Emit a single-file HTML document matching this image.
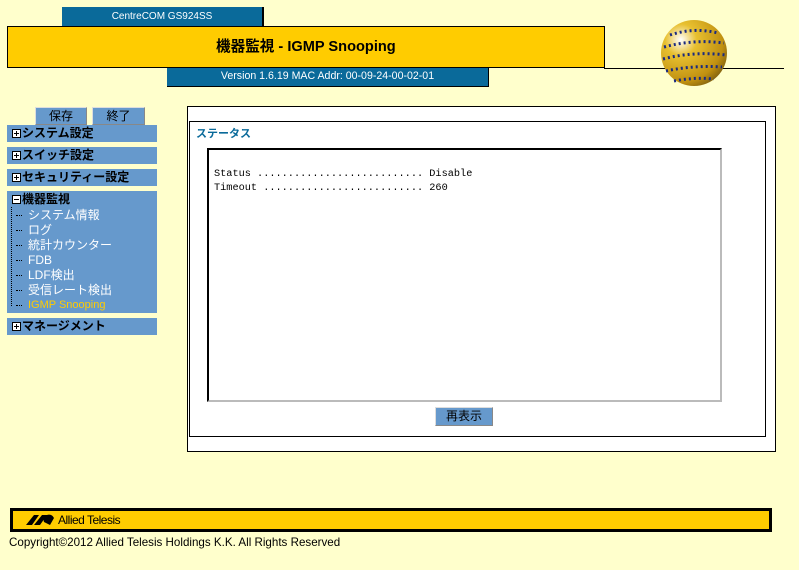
<!DOCTYPE html>
<html><head><meta charset="utf-8"><style>
*{margin:0;padding:0;box-sizing:border-box}
body{width:799px;height:570px;background:#FFFFCC;font-family:"Liberation Sans","Noto Sans CJK JP",sans-serif;position:relative;overflow:hidden}
.a{position:absolute}
.blue{background:#0A6A9A;color:#fff}
.menu{position:absolute;left:7px;width:150px;background:#6699CC;font-size:12px;font-weight:bold;color:#000;line-height:17px;padding-left:5px}
.box{display:inline-block;width:9px;height:9px;border:1px solid #000;background:#fff;position:relative;margin-right:1px;vertical-align:-1px}
.box:before{content:"";position:absolute;left:1px;top:3px;width:5px;height:1px;background:#000}
.plus:after{content:"";position:absolute;left:3px;top:1px;width:1px;height:5px;background:#000}
.sub{font-weight:normal;color:#fff;font-size:12px;line-height:15px;padding-left:16px;position:relative}
.sub:before{content:"";position:absolute;left:4px;top:7px;width:6px;border-top:1px dotted #000}
.btn{position:absolute;background:#6699CC;border:1px solid;border-color:#ddd #888 #888 #ddd;font-size:12px;text-align:center;line-height:16px}
</style></head><body>
<div class="a blue" style="left:62px;top:7px;width:202px;height:20px;border-right:2px solid #000;font-size:10px;text-align:center;line-height:19px">CentreCOM GS924SS</div>
<div class="a" style="left:7px;top:26px;width:598px;height:42px;background:#FFCC00;border:1px solid #000"></div>
<div class="a" style="left:216px;top:38px;font-size:14.6px;font-weight:bold;line-height:18px">機器監視 - IGMP Snooping</div>
<div class="a" style="left:604px;top:68px;width:180px;height:1px;background:#000"></div>
<div class="a blue" style="left:167px;top:68px;width:322px;height:19px;font-size:10.6px;text-align:center;line-height:17px;border-bottom:1px solid #000;border-right:1px solid #000">Version 1.6.19 MAC Addr: 00-09-24-00-02-01</div>
<svg class="a" style="left:660px;top:19px" width="68" height="68" viewBox="0 0 68 68">
<defs><radialGradient id="g" cx="0.3" cy="0.3" r="0.8"><stop offset="0" stop-color="#fff"/><stop offset="0.3" stop-color="#E8C030"/><stop offset="0.8" stop-color="#C09010"/><stop offset="1" stop-color="#806010"/></radialGradient></defs>
<circle cx="34" cy="34" r="33" fill="url(#g)"/>
<g stroke="#1a2a80" stroke-width="3" stroke-dasharray="2 3" fill="none">
<path d="M10 16 Q34 8 58 14"/><path d="M4 28 Q34 20 64 24"/><path d="M3 40 Q34 32 66 36"/><path d="M6 52 Q34 46 62 48"/><path d="M14 62 Q34 58 54 60"/></g>
</svg>
<div class="btn" style="left:35px;top:107px;width:52px;height:18px">保存</div>
<div class="btn" style="left:92px;top:107px;width:53px;height:18px">終了</div>
<div class="menu" style="top:125px;height:17px;padding-left:5px"><span class="box plus"></span>システム設定</div>
<div class="menu" style="top:147px;height:17px"><span class="box plus"></span>スイッチ設定</div>
<div class="menu" style="top:169px;height:17px"><span class="box plus"></span>セキュリティー設定</div>
<div class="menu" style="top:191px;height:122px"><span class="box"></span>機器監視
<div class="sub">システム情報</div><div class="sub">ログ</div><div class="sub">統計カウンター</div><div class="sub">FDB</div><div class="sub">LDF検出</div><div class="sub">受信レート検出</div><div class="sub" style="color:#FFCC00;font-size:11px">IGMP Snooping</div></div>
<div class="a" style="left:11px;top:207px;height:99px;border-left:1px dotted #000"></div>
<div class="menu" style="top:318px;height:17px"><span class="box plus"></span>マネージメント</div>
<div class="a" style="left:187px;top:106px;width:589px;height:346px;background:#fff;border:1px solid #000"></div>
<div class="a" style="left:189px;top:121px;width:577px;height:316px;border:1px solid #000"></div>
<div class="a" style="left:196px;top:125px;font-size:11px;font-weight:bold;color:#0A6A9A">ステータス</div>
<div class="a" style="left:207px;top:148px;width:515px;height:254px;border:2px solid;border-color:#000 #bbb #bbb #000;font-family:'Liberation Mono',monospace;font-size:10.25px;line-height:14px;padding:17px 0 0 5px;white-space:pre">Status ........................... Disable
Timeout .......................... 260</div>
<div class="btn" style="left:435px;top:407px;width:58px;height:19px;line-height:17px">再表示</div>
<div class="a" style="left:10px;top:508px;width:762px;height:24px;background:#FFCC00;border:3px solid #000"></div>
<svg class="a" style="left:26px;top:514px" width="30" height="12" viewBox="0 0 30 12"><path d="M0 11L8 1H13L6 11ZM8 11L16 1H21L14 11ZM18 8A5 5 0 1 1 28 4L24 11Z" fill="#000"/></svg>
<div class="a" style="left:58px;top:513px;font-size:12px;letter-spacing:-0.5px">Allied Telesis</div>
<div class="a" style="left:9px;top:536px;font-size:11.6px">Copyright©2012 Allied Telesis Holdings K.K. All Rights Reserved</div>
</body></html>
